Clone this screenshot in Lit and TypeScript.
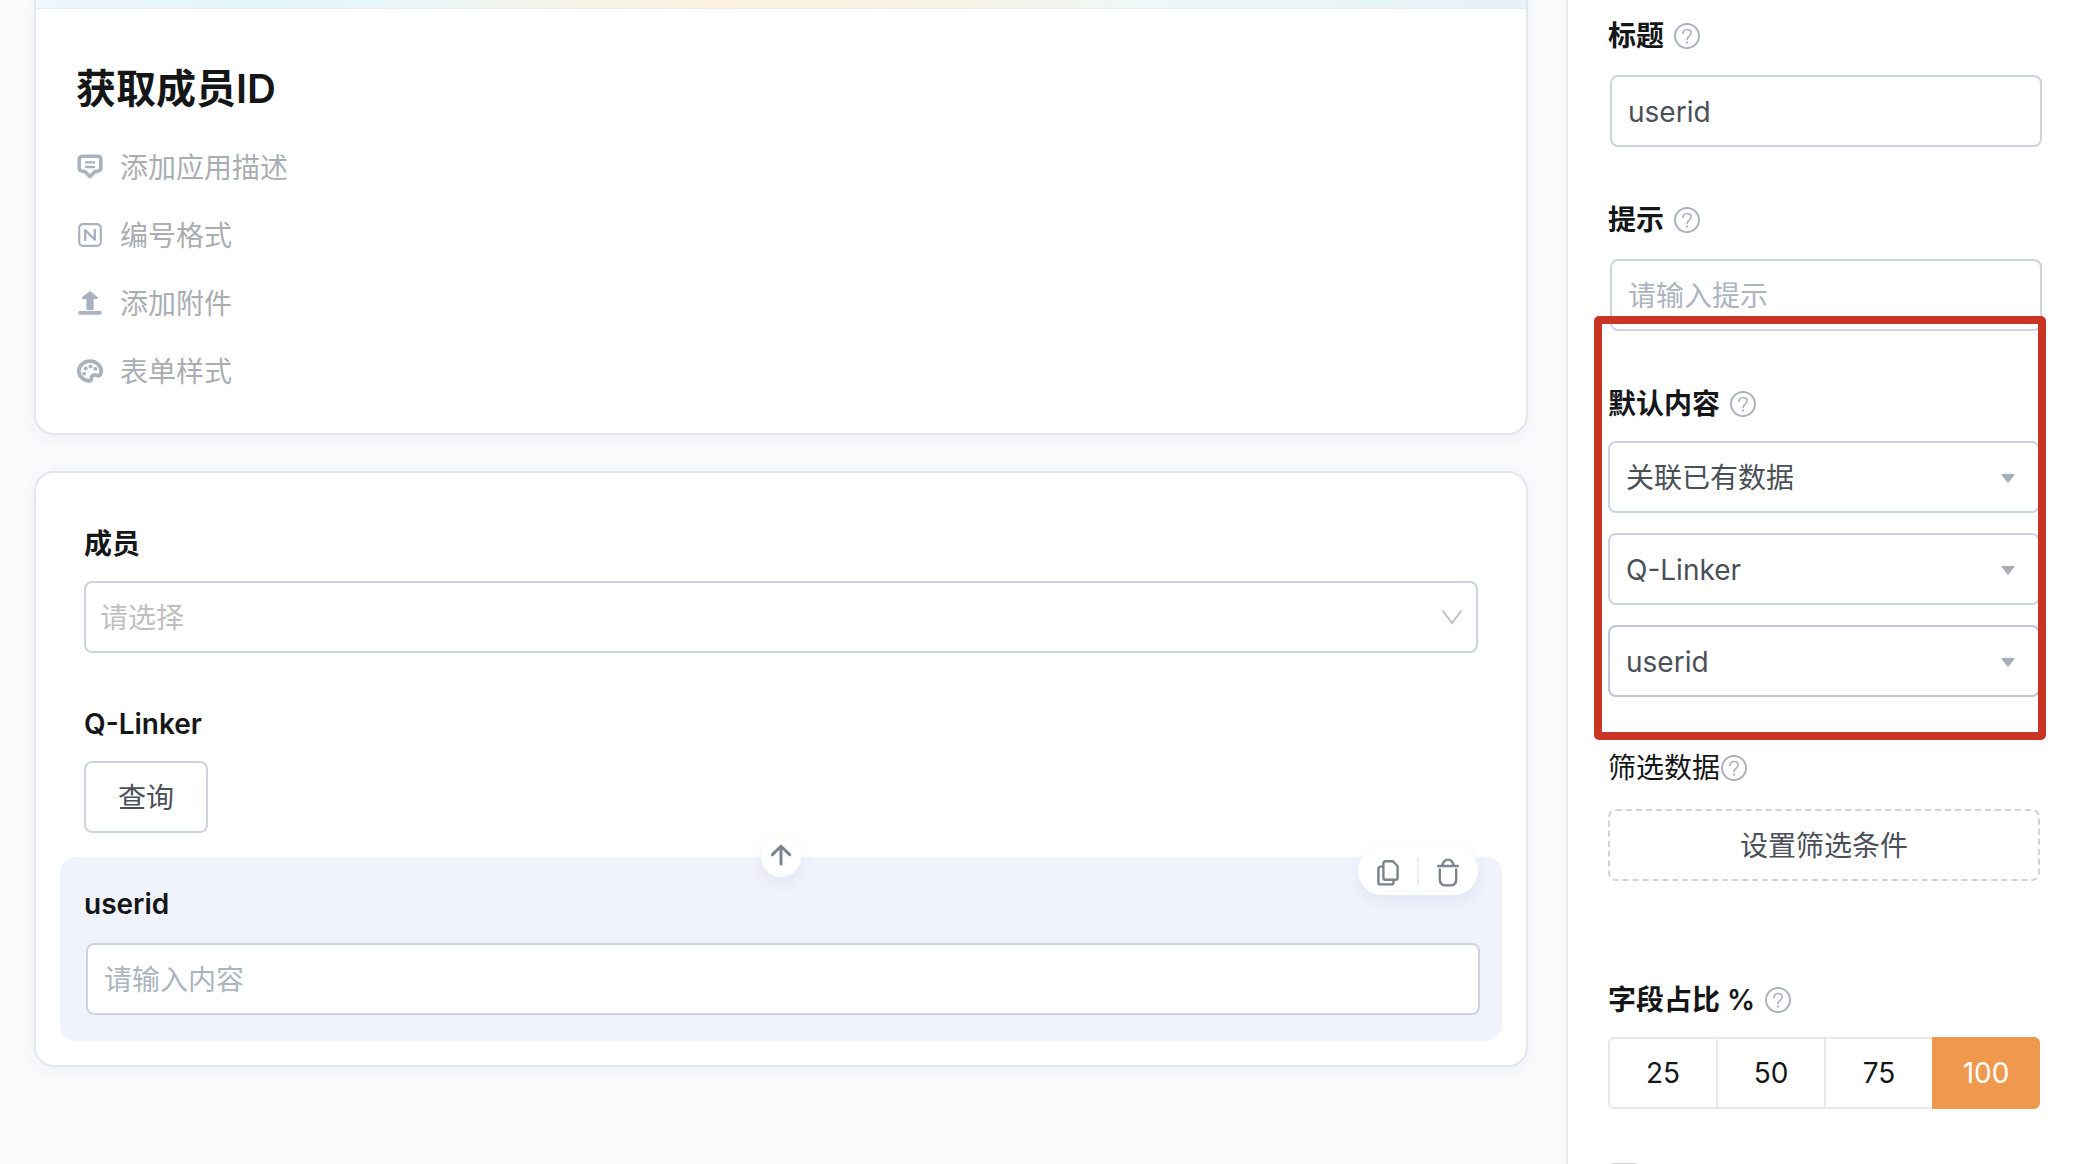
import { LitElement, html, css, svg, TemplateResult } from "lit";
import { customElement, property, state } from "lit/decorators.js";
import { classMap } from "lit/directives/class-map.js";

const icons: Record<string, TemplateResult> = {
  describe: svg`
    <path d="M6.400 3.200h15.200a3.200 3.200 0 0 1 3.200 3.200v8.600a3.200 3.200 0 0 1-3.200 3.200h-2.200L14 23.600l-5.400-5.400H6.400a3.200 3.200 0 0 1-3.200-3.200V6.400a3.200 3.200 0 0 1 3.200-3.200z"
      fill="none" stroke="currentColor" stroke-width="3.600" stroke-linejoin="round"/>
    <path d="M10 9.400h8M10 14h8" fill="none" stroke="currentColor" stroke-width="2.400" stroke-linecap="round"/>`,
  number: svg`
    <rect x="3.200" y="3.200" width="21.600" height="21.600" rx="3.600" fill="none" stroke="currentColor" stroke-width="2.200"/>
    <path d="M9.200 19V9.200l9.600 9.400V9" fill="none" stroke="currentColor" stroke-width="2.400" stroke-linecap="round" stroke-linejoin="round"/>`,
  attach: svg`
    <path d="M14 2l7.600 6c.9.800.4 2-.7 2H17.600v9.800a1.200 1.200 0 0 1-1.200 1.200h-4.800a1.200 1.200 0 0 1-1.200-1.200V10H7.100c-1.100 0-1.600-1.200-.7-2z" fill="currentColor"/>
    <rect x="2.200" y="22" width="23.600" height="3.800" rx="1.800" fill="currentColor"/>`,
  palette: svg`
    <path d="M14 4.200C7.800 4.200 2.800 8.600 2.800 14s4.800 9.800 10.600 9.800c1.400 0 2-.8 1.900-2-.1-2.300 1.200-3.900 3.500-3.900 1.300 0 2 .7 3.300.9 1.600.2 3-1.700 3.100-4.800C25.200 8.600 20.200 4.200 14 4.200z"
      fill="none" stroke="currentColor" stroke-width="3.800" stroke-linejoin="round"/>
    <g fill="currentColor"><circle cx="8.200" cy="16.600" r="1.900"/><circle cx="9.700" cy="11.600" r="2"/><circle cx="14.500" cy="9.600" r="2"/><circle cx="19.300" cy="11.800" r="2"/></g>`,
  up: svg`<path d="M14 21V3.500M5.400 11.600L14 3.200l8.600 8.400" fill="none" stroke="currentColor" stroke-width="3" stroke-linecap="round" stroke-linejoin="round"/>`,
  copy: svg`
    <path d="M8.600 9.600H6.400a2 2 0 0 0-2 2v13.800a2 2 0 0 0 2 2h11a2 2 0 0 0 2-2v-1.800" fill="none" stroke="currentColor" stroke-width="2.400" stroke-linecap="round"/>
    <path d="M11.400 4.200h7.200l5 4.800v11.800a2 2 0 0 1-2 2H11.400a2 2 0 0 1-2-2V6.200a2 2 0 0 1 2-2z" fill="none" stroke="currentColor" stroke-width="2.400" stroke-linejoin="round"/>`,
  trash: svg`
    <path d="M4.200 9h19.600M8.600 8.400a5.400 5.800 0 0 1 10.800 0M5.800 12.400v10.600a5.400 5.400 0 0 0 5.400 5.400h5.600a5.400 5.400 0 0 0 5.400-5.400v-10.600" fill="none" stroke="currentColor" stroke-width="2.400" stroke-linecap="round"/>`,
  help: svg`
    <circle cx="14" cy="14" r="12" fill="none" stroke="currentColor" stroke-width="2"/>
    <path d="M9.900 11.400c0-2.300 1.800-3.900 4.100-3.900s4.100 1.500 4.100 3.600c0 1.800-1 2.600-2.200 3.500-1.200.9-1.900 1.600-1.900 3" fill="none" stroke="currentColor" stroke-width="1.700" stroke-linecap="round"/>
    <circle cx="14" cy="20.600" r="1.200" fill="currentColor"/>`,
  chevron: svg`<path d="M4.500 7.500L14 20l9.500-12.500" fill="none" stroke="currentColor" stroke-width="2"/>`,
  caret: svg`<path d="M8.200 11h11.600c.7 0 .9.600.5 1.100l-5.500 7.100c-.4.500-1.200.5-1.600 0l-5.500-7.100c-.4-.5-.2-1.100.5-1.100z" fill="currentColor"/>`,
};

const icon = (name: string) =>
  html`<svg class="icon" viewBox="0 0 28 28" aria-hidden="true">${icons[name]}</svg>`;

const shared = css`
  :host {
    display: block;
  }
  * {
    box-sizing: border-box;
  }
  .icon {
    display: block;
    width: 28px;
    height: 28px;
    flex: none;
    overflow: visible;
  }
  button,
  input,
  select {
    font: inherit;
    margin: 0;
  }
  button {
    cursor: pointer;
  }
  .label {
    display: block;
    font-weight: 600;
    line-height: 46px;
    color: #141618;
  }
  .input,
  .select {
    display: block;
    width: 100%;
    height: 72px;
    padding: 2px 16px 0;
    border: 2px solid #cdd3e1;
    border-radius: 8px;
    background: #fff;
    color: #4a4f58;
    outline: none;
  }
  .input::placeholder {
    color: #adb4c0;
    opacity: 1;
  }
  .select {
    appearance: none;
    padding-right: 48px;
  }
  .picker {
    display: grid;
    align-items: center;
  }
  .picker > * {
    grid-area: 1 / 1;
  }
  .picker > .icon {
    justify-self: end;
    margin-right: 18px;
    pointer-events: none;
    color: #a7aeba;
  }
`;

@customElement("form-header")
class FormHeader extends LitElement {
  static styles = [
    shared,
    css`
      .card {
        background: #fff;
        border: 2px solid #e3e6ee;
        border-top: 0;
        border-radius: 0 0 20px 20px;
        box-shadow: 0 4px 16px rgba(40, 50, 90, 0.05);
      }
      .banner {
        height: 9px;
        border-bottom: 1px solid #e3ebee;
        background: linear-gradient(90deg, #eff7fb, #e2f6fa 14%, #e6f6fa 22%, #f8f4e6 37%, #fcf2df 45%, #fbf2e1 56%, #f7f4e8 63%, #eff8f6 74%, #e6f5f5 90%, #e6f1fa);
      }
      .content {
        display: flex;
        flex-direction: column;
        align-items: flex-start;
        gap: 22px;
        padding: 50px 40px 38px;
      }
      .title {
        margin: 0 0 4px;
        font-size: 40px;
        font-weight: 600;
        line-height: 60px;
        color: #141618;
      }
      .action {
        display: flex;
        align-items: center;
        gap: 16px;
        padding: 0;
        border: 0;
        background: none;
        line-height: 46px;
        color: #aaadb2;
      }
      .action .icon {
        margin-bottom: 2px;
        color: #abb2bf;
      }
    `,
  ];

  private actions = [
    { icon: "describe", text: "添加应用描述" },
    { icon: "number", text: "编号格式" },
    { icon: "attach", text: "添加附件" },
    { icon: "palette", text: "表单样式" },
  ];

  render() {
    return html`
      <section class="card">
        <div class="banner"></div>
        <div class="content">
          <h1 class="title">获取成员ID</h1>
          ${this.actions.map(
            (a) => html`<button class="action" type="button">${icon(a.icon)}<span>${a.text}</span></button>`,
          )}
        </div>
      </section>
    `;
  }
}

@customElement("form-fields")
class FormFields extends LitElement {
  static styles = [
    shared,
    css`
      .card {
        padding: 24px;
        background: #fff;
        border: 2px solid #e3e6ee;
        border-radius: 20px;
        box-shadow: 0 4px 16px rgba(40, 50, 90, 0.05);
      }
      .field {
        position: relative;
        display: flex;
        flex-direction: column;
        gap: 14px;
        padding: 24px;
      }
      .field.active {
        border-radius: 16px;
        background: #f0f3fc;
      }
      .field .select {
        padding-left: 14px;
        color: #bfbfbf;
      }
      .field .chevron > .icon {
        margin-right: 12px;
        color: #bfbfbf;
      }
      .field .input {
        margin: 2px;
      }
      .query {
        align-self: flex-start;
        height: 72px;
        padding: 0 32px 2px;
        border: 2px solid #cdd3e1;
        border-radius: 8px;
        background: #fff;
        color: #4a4f58;
      }
      .move,
      .tools {
        position: absolute;
        display: flex;
        align-items: center;
        justify-content: center;
        background: #fff;
        color: #7c838d;
        box-shadow: 0 6px 16px rgba(60, 70, 140, 0.07);
      }
      .move {
        top: -20px;
        left: 50%;
        width: 40px;
        height: 40px;
        margin-left: -20px;
        padding: 0;
        border: 0;
        border-radius: 50%;
      }
      .tools {
        top: -10px;
        right: 24px;
        height: 48px;
        padding: 0 8px;
        border-radius: 24px;
      }
      .tool {
        display: grid;
        place-items: center;
        width: 44px;
        height: 40px;
        padding: 0;
        border: 0;
        background: none;
        color: inherit;
      }
      .divider {
        width: 2px;
        height: 28px;
        margin: 0 7px;
        background: #ececee;
      }
    `,
  ];

  render() {
    return html`
      <section class="card">
        <div class="field">
          <label class="label" for="member">成员</label>
          <div class="picker chevron">
            <select class="select" id="member">
              <option>请选择</option>
            </select>
            ${icon("chevron")}
          </div>
        </div>
        <div class="field">
          <span class="label">Q-Linker</span>
          <button class="query" type="button">查询</button>
        </div>
        <div class="field active">
          <button class="move" type="button" aria-label="上移">${icon("up")}</button>
          <div class="tools">
            <button class="tool" type="button" aria-label="复制">${icon("copy")}</button>
            <span class="divider"></span>
            <button class="tool" type="button" aria-label="删除">${icon("trash")}</button>
          </div>
          <label class="label" for="userid">userid</label>
          <input class="input" id="userid" type="text" placeholder="请输入内容" />
        </div>
      </section>
    `;
  }
}

@customElement("field-settings")
class FieldSettings extends LitElement {
  static styles = [
    shared,
    css`
      .panel {
        position: relative;
        display: flex;
        flex-direction: column;
        gap: 48px;
        padding: 13px 36px 0 40px;
      }
      .group {
        display: flex;
        flex-direction: column;
      }
      .head {
        display: flex;
        align-items: center;
        gap: 9px;
        margin-bottom: 14px;
      }
      .head .icon {
        color: #acb3bf;
      }
      .head.plain {
        gap: 0;
        margin-bottom: 18px;
      }
      .head.plain .label {
        font-weight: 400;
      }
      .group > .input {
        margin: 2px 0 2px 2px;
      }
      .stack {
        display: flex;
        flex-direction: column;
        gap: 20px;
      }
      .stack .picker:last-child .select {
        border-color: #bfc5d4;
      }
      .condition {
        height: 72px;
        margin-bottom: 48px;
        padding: 0 0 2px;
        border: 2px dashed #cdd3e1;
        border-radius: 8px;
        background: #fff;
        color: #4a4f58;
      }
      .segments {
        display: grid;
        grid-template-columns: repeat(4, 1fr);
        margin: 0;
        padding: 0;
        border: 0;
      }
      .segment {
        display: grid;
        place-items: center;
        height: 72px;
        border: 2px solid #e5e8ed;
        border-right-width: 0;
        color: #141618;
        cursor: pointer;
      }
      .segment:first-child {
        border-radius: 6px 0 0 6px;
      }
      .segment:last-child {
        border-radius: 0 6px 6px 0;
        border-right-width: 2px;
      }
      .segment.on {
        border-color: #ee994e;
        background: #ee994e;
        color: #fff;
      }
      .segment > * {
        grid-area: 1 / 1;
      }
      .segment input {
        appearance: none;
        width: 100%;
        height: 100%;
        outline: none;
        cursor: pointer;
      }
      .check {
        appearance: none;
        width: 32px;
        height: 32px;
        margin: 6px 0 0;
        border: 2px solid #cdd3e1;
        border-radius: 6px;
        background: #fff;
      }
      .highlight {
        position: absolute;
        top: 316px;
        left: 26px;
        right: 30px;
        height: 424px;
        border: 8px solid #c93524;
        border-radius: 5px;
        pointer-events: none;
      }
    `,
  ];

  @property({ type: Array }) ratios = ["25", "50", "75", "100"];
  @state() private ratio = "100";

  private sources = [
    { id: "source", name: "数据来源", value: "关联已有数据" },
    { id: "linker", name: "关联字段", value: "Q-Linker" },
    { id: "column", name: "显示字段", value: "userid" },
  ];

  render() {
    return html`
      <aside class="panel">
        <div class="group">
          <div class="head"><label class="label" for="title">标题</label>${icon("help")}</div>
          <input class="input" id="title" type="text" .value=${"userid"} />
        </div>
        <div class="group">
          <div class="head"><label class="label" for="hint">提示</label>${icon("help")}</div>
          <input class="input" id="hint" type="text" placeholder="请输入提示" />
        </div>
        <div class="group">
          <div class="head"><label class="label" for="source">默认内容</label>${icon("help")}</div>
          <div class="stack">
            ${this.sources.map(
              (s) => html`
                <div class="picker">
                  <select class="select" id=${s.id} aria-label=${s.name}>
                    <option>${s.value}</option>
                  </select>
                  ${icon("caret")}
                </div>
              `,
            )}
          </div>
        </div>
        <div class="group">
          <div class="head plain"><span class="label">筛选数据</span>${icon("help")}</div>
          <button class="condition" type="button">设置筛选条件</button>
        </div>
        <div class="group">
          <div class="head"><span class="label" id="ratio">字段占比 %</span>${icon("help")}</div>
          <fieldset class="segments" aria-labelledby="ratio">
            ${this.ratios.map(
              (r) => html`
                <label class=${classMap({ segment: true, on: r === this.ratio })}>
                  <input
                    type="radio"
                    name="ratio"
                    .value=${r}
                    .checked=${r === this.ratio}
                    @change=${() => (this.ratio = r)}
                  />
                  <span>${r}</span>
                </label>
              `,
            )}
          </fieldset>
        </div>
        <input class="check" type="checkbox" aria-label="必填" />
        <div class="highlight"></div>
      </aside>
    `;
  }
}

@customElement("app-root")
class AppRoot extends LitElement {
  static styles = css`
    :host {
      display: grid;
      grid-template-columns: minmax(0, 1fr) 510px;
      height: 100vh;
      overflow: hidden;
      background: #f9fafc;
      font-family: Inter, "Noto Sans CJK SC", sans-serif;
      font-size: 28px;
    }
    .canvas {
      display: flex;
      flex-direction: column;
      gap: 36px;
      min-height: 0;
      padding: 0 38px 0 34px;
    }
    .side {
      min-height: 0;
      overflow: hidden;
      border-left: 2px solid #e5e8ed;
      background: #fff;
    }
  `;

  render() {
    return html`
      <main class="canvas">
        <form-header></form-header>
        <form-fields></form-fields>
      </main>
      <field-settings class="side"></field-settings>
    `;
  }
}
